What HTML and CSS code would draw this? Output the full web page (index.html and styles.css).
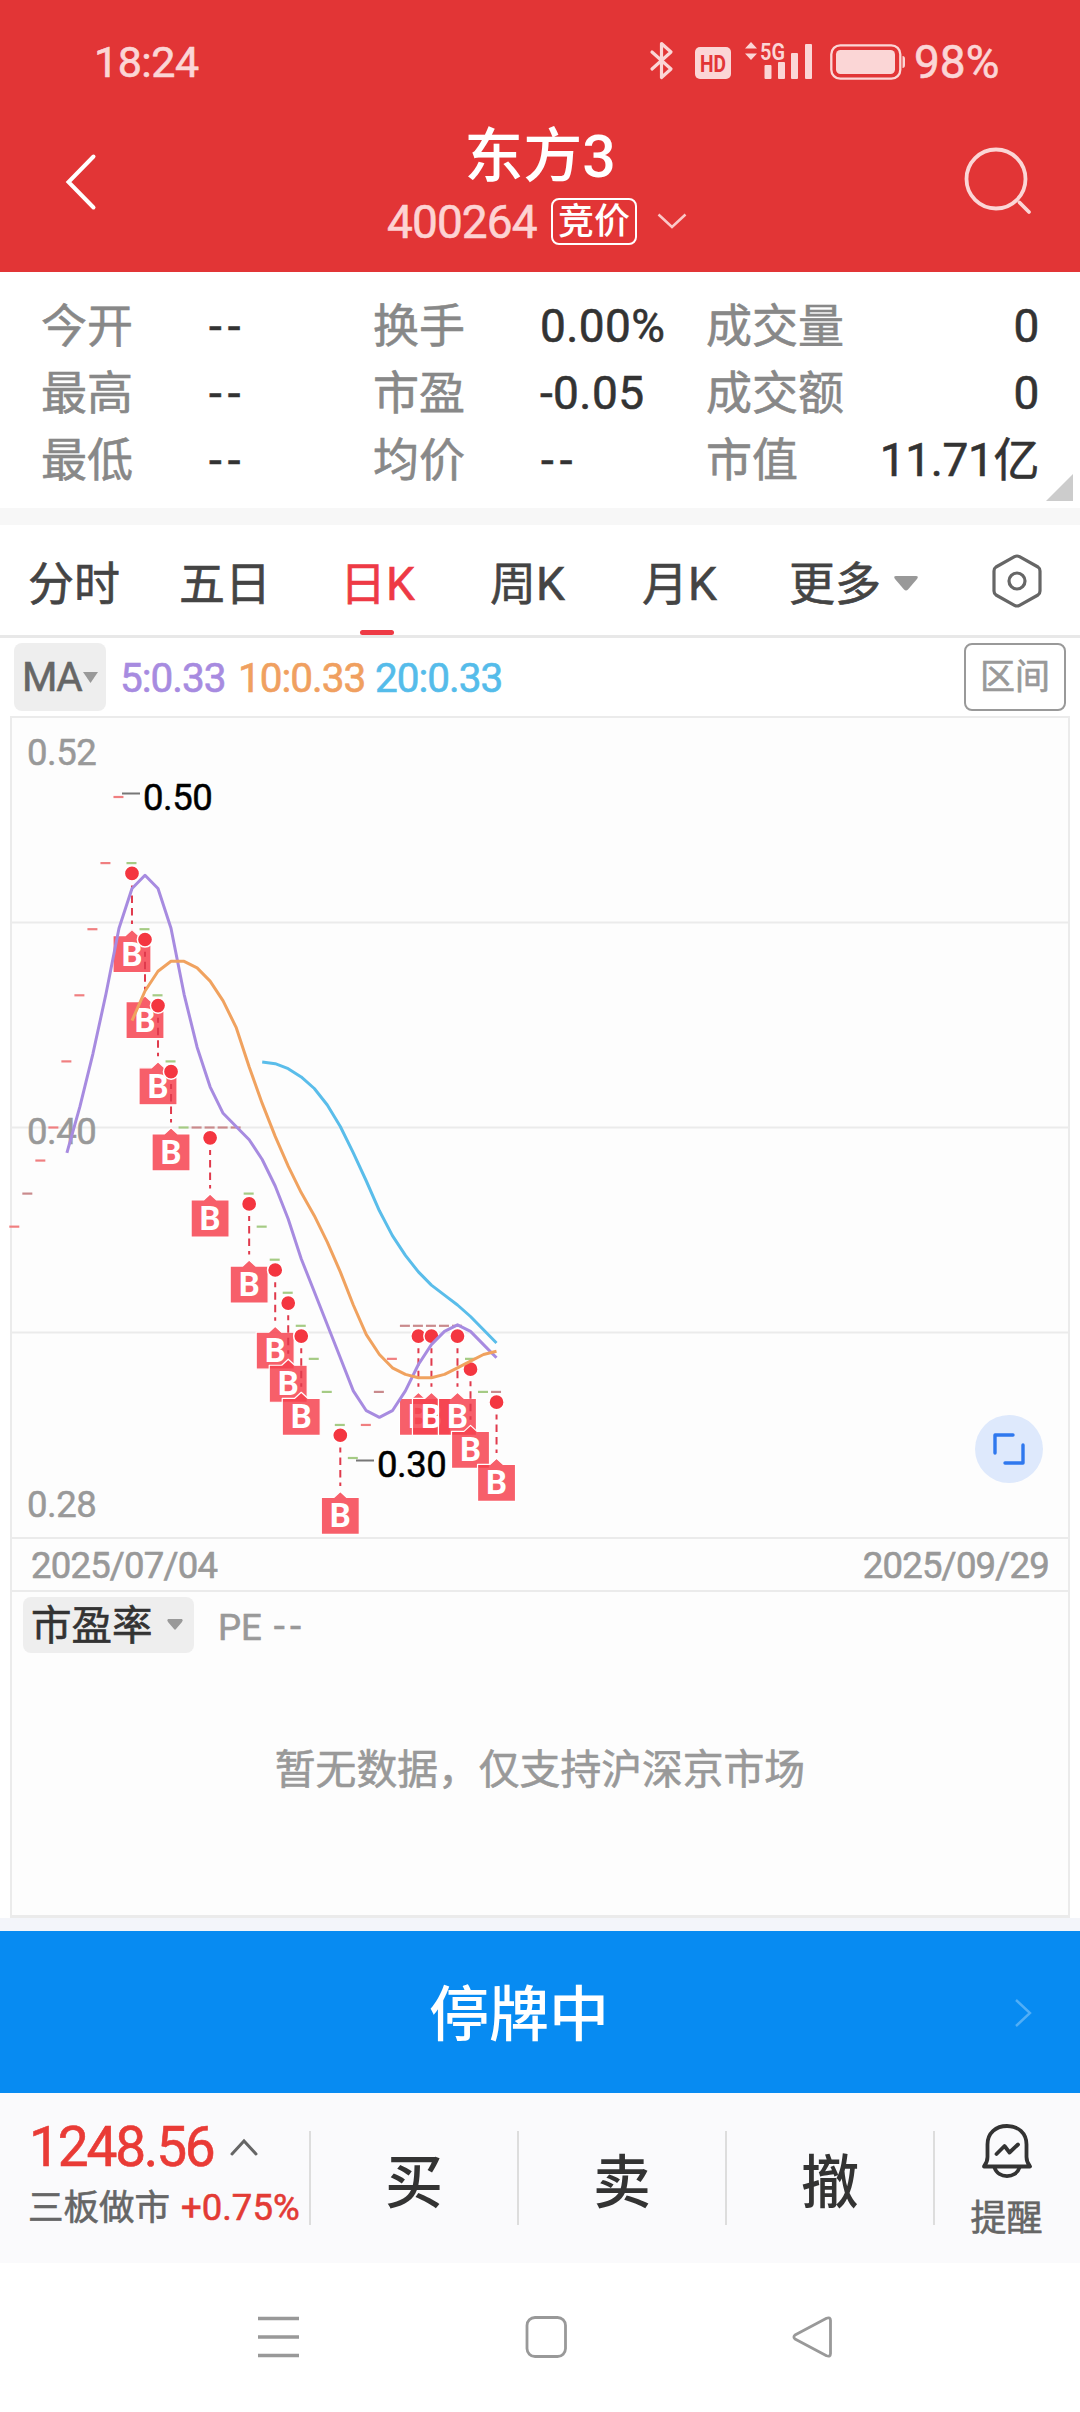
FILE: index.html
```html
<!DOCTYPE html>
<html lang="zh-CN">
<head>
<meta charset="utf-8">
<title>东方3 400264</title>
<link rel="stylesheet" href="styles.css">
</head>
<body>
<div class="screen">
  <header class="header">
    <div class="status">
      <span class="clock">18:24</span>
      <div class="status-icons">
        <svg width="24" height="40" viewBox="0 0 24 40" fill="none" stroke="#fbd6d6" stroke-width="3.200" stroke-linejoin="round" stroke-linecap="round"><path d="M2 11 L21 28 L11.500 36.500 V2.500 L21 11 L2 28"/></svg>
        <svg class="hd" width="36" height="32" viewBox="0 0 36 32"><rect width="36" height="32" rx="5" fill="#fbd6d6"/><text x="18" y="25" text-anchor="middle" font-size="24" font-weight="700" textLength="26" lengthAdjust="spacingAndGlyphs" fill="#e23536">HD</text></svg>
        <svg class="signal" width="68" height="40" viewBox="0 0 68 40" fill="#fbd6d6"><path d="M0 7.500 L6 1 L12 7.500Z M0 12.500 L6 19 L12 12.500Z"/><text x="15" y="18.500" font-size="24" font-weight="600" textLength="25" lengthAdjust="spacingAndGlyphs">5G</text><rect x="19.500" y="24" width="7" height="14" rx="1"/><rect x="33" y="21" width="7" height="17" rx="1"/><rect x="46" y="12" width="7" height="26" rx="1"/><rect x="60" y="3" width="7" height="35" rx="1"/></svg>
        <svg class="battery" width="76" height="36" viewBox="0 0 76 36"><rect x="1.300" y="1.300" width="69" height="33.400" rx="9" fill="none" stroke="#fbd6d6" stroke-width="2.300"/><rect x="6" y="6" width="59" height="24" rx="4.500" fill="#fbd6d6"/><path d="M72.500 12 q2.500 0 2.500 3 v6 q0 3 -2.500 3z" fill="#fbd6d6"/></svg>
        <span class="percent">98%</span>
      </div>
    </div>
    <div class="titlebar">
      <svg class="back" width="32" height="58" viewBox="0 0 32 58" fill="none" stroke="#fff" stroke-width="4" stroke-linecap="round"><path d="M28.500 3.500 L3.500 29 L28.500 54.500"/></svg>
      <div class="title">
        <h1>东方3</h1>
        <div class="code-row"><span class="code">400264</span><span class="badge">竞价</span><svg width="30" height="16" viewBox="0 0 30 16" fill="none" stroke="#fbc8c8" stroke-width="2.500"><path d="M1.500 1.500 L15 14 L28.500 1.500"/></svg></div>
      </div>
      <svg class="search" width="68" height="68" viewBox="0 0 68 68" fill="none" stroke="#fbd6d6" stroke-width="3.800" stroke-linecap="round"><circle cx="32" cy="32" r="29.500"/><path d="M55.500 55.500 L65 65"/></svg>
    </div>
  </header>

  <section class="quotes">
    <span class="k">今开</span><span class="v dash">--</span><span class="k">换手</span><span class="v">0.00%</span><span class="k">成交量</span><span class="v r">0</span>
    <span class="k">最高</span><span class="v dash">--</span><span class="k">市盈</span><span class="v">-0.05</span><span class="k">成交额</span><span class="v r">0</span>
    <span class="k">最低</span><span class="v dash">--</span><span class="k">均价</span><span class="v dash">--</span><span class="k">市值</span><span class="v r cap">11.71亿</span>
    <svg class="corner" width="27" height="27" viewBox="0 0 27 27"><path d="M27 0 V27 H0Z" fill="#ccc"/></svg>
  </section>

  <nav class="tabs">
    <span>分时</span><span>五日</span><span class="on">日K</span><span>周K</span><span>月K</span>
    <span class="more">更多<svg width="24" height="15" viewBox="0 0 24 15"><path d="M2 0 H22 Q25 0 23 3 L14 13.500 Q12 15.500 10 13.500 L1 3 Q-1 0 2 0Z" fill="#999"/></svg></span>
    <svg class="gear" width="50" height="54" viewBox="0 0 50 54" fill="none" stroke="#666" stroke-width="3.200" stroke-linejoin="round"><path d="M22.500 2.700 Q25 1.300 27.500 2.700 L46 13 Q48 14.300 48 17 V37 Q48 39.700 46 41 L27.500 51.300 Q25 52.700 22.500 51.300 L4 41 Q2 39.700 2 37 V17 Q2 14.300 4 13Z"/><circle cx="25" cy="27" r="8"/></svg>
  </nav>

  <div class="ma-row">
    <span class="chip ma">MA<svg width="15" height="11" viewBox="0 0 15 11"><path d="M0 0 H15 L7.500 11Z" fill="#999"/></svg></span>
    <span class="m5">5:0.33</span><span class="m10">10:0.33</span><span class="m20">20:0.33</span>
    <span class="range">区间</span>
  </div>

  <main class="panel">
    <div class="chart">
      <svg id="kline" width="1057" height="819" viewBox="12 718.5 1057 819"></svg>
      <button class="expand" aria-label="全屏"><svg width="32" height="32" viewBox="0 0 32 32" fill="none" stroke="#2f78ee" stroke-width="3.400" stroke-linecap="round" stroke-linejoin="round"><path d="M2 20 V2 H20 M30 12 V30 H12"/></svg></button>
    </div>
    <div class="dates"><span>2025/07/04</span><span>2025/09/29</span></div>
    <div class="pe">
      <div class="pe-head"><span class="chip pe-chip">市盈率<svg width="16" height="11" viewBox="0 0 16 11"><path d="M1 0 H15 Q16.500 1 15 3 L9 10 Q8 11.500 7 10 L1 3 Q-.5 1 1 0Z" fill="#999"/></svg></span><span class="pe-val">PE <span class="dash">--</span></span></div>
      <p class="empty">暂无数据，仅支持沪深京市场</p>
    </div>
  </main>

  <div class="halt"><span>停牌中</span><svg width="18" height="28" viewBox="0 0 18 28" fill="none" stroke="#51aef6" stroke-width="2.400"><path d="M2 1 L16 14 L2 27"/></svg></div>

  <footer class="actions">
    <div class="index">
      <div class="index-top"><span>1248.56</span><svg width="28" height="17" viewBox="0 0 28 17" fill="none" stroke="#666" stroke-width="3" stroke-linecap="round"><path d="M2 15 L14 2 L26 15"/></svg></div>
      <div class="index-sub"><span>三板做市</span><span class="up">+0.75%</span></div>
    </div>
    <div class="act">买</div><div class="act">卖</div><div class="act">撤</div>
    <div class="alert">
      <svg width="52" height="54" viewBox="0 0 52 54" fill="none" stroke="#333" stroke-width="3.800" stroke-linejoin="round"><path d="M3 42.500 Q6.500 38 6.500 33 V20.500 C6.500 9 15 2 26 2 C37 2 45.500 9 45.500 20.500 V33 Q45.500 38 49 42.500Z"/><path d="M13.500 43.500 C17 55 35 55 38.500 43.500"/><path d="M15.500 30 L23.500 22 L28.500 28.500 L37 20.500" stroke-linecap="round"/></svg>
      <span>提醒</span>
    </div>
  </footer>

  <div class="sysnav">
    <svg width="42" height="42" viewBox="0 0 42 42" stroke="#999" stroke-width="3.400"><path d="M0 2.500 H41 M0 21 H41 M0 39.500 H41"/></svg>
    <svg width="42" height="42" viewBox="0 0 42 42" fill="none" stroke="#999" stroke-width="2.800"><rect x="2" y="1.500" width="38.500" height="39" rx="8"/></svg>
    <svg width="42" height="42" viewBox="0 0 42 42" fill="none" stroke="#999" stroke-width="2.800" stroke-linejoin="round"><path d="M3 19 L34.500 2.200 Q38.500 .8 38.500 4.500 V37.500 Q38.500 41.200 34.500 39.800 L3 23 Q.8 21 3 19Z"/></svg>
  </div>
</div>
<script src="chart.js"></script>
</body>
</html>
```

FILE: styles.css
```css
* { box-sizing: border-box; }
body { margin: 0; background: #fff; font-family: Roboto, "Noto Sans CJK SC", sans-serif; color: #333; -webkit-text-stroke: .6px; }
svg { display: block; flex: none; overflow: visible; -webkit-text-stroke: 0; }
svg text { font-family: Roboto, sans-serif; }
.screen { width: 1080px; height: 2412px; display: flex; flex-direction: column; overflow: hidden; white-space: nowrap; }
.screen > * { flex: none; }

.header { height: 272px; background: #e23536; color: #fff; }
.status { height: 122px; padding: 0 70px 0 94px; display: flex; justify-content: space-between; align-items: center; color: #fbd6d6; font-size: 43px; }
.clock { letter-spacing: -.5px; padding-top: 1px; }
.status-icons { display: flex; align-items: center; height: 46px; }
.hd { margin: 3px 0 0 21px; }
.signal { margin-left: 14px; }
.battery { margin: 1px 0 0 17px; }
.percent { width: 96px; margin: 1px 0 0 8px; font-size: 46px; letter-spacing: 0; }
.titlebar { height: 150px; display: grid; grid-template-columns: 200px 1fr 200px; }
.back { margin: 31px 0 0 65px; }
.search { margin: 25px 0 0 84px; }
.title { display: flex; flex-direction: column; }
.title h1 { margin: 0; height: 69px; line-height: 69px; font-size: 59px; font-weight: 500; text-align: center; -webkit-text-stroke: 0; }
.code-row { display: flex; align-items: center; height: 58px; margin-top: 1px; padding-left: 187px; }
.code { width: 164px; padding-top: 2px; font-size: 46px; color: #fdd3d3; letter-spacing: -.9px; }
.badge { width: 86px; height: 47px; line-height: 44px; margin-right: 20px; border: 2px solid #fff; border-radius: 8px; text-align: center; font-size: 36px; font-weight: 500; -webkit-text-stroke: 0; }

.quotes { position: relative; height: 236px; padding: 21px 41px 14px 41px; display: grid; grid-template-columns: 167px 165px 167px 166px 167px 1fr; grid-template-rows: repeat(3, 67px); line-height: 67px; font-size: 46px; }
.k { color: #888; }
.v { letter-spacing: .4px; }
.v.dash { letter-spacing: 6px; padding-left: 1px; }
.r { text-align: right; letter-spacing: -.4px; }
.cap { margin-left: -60px; }
.corner { position: absolute; right: 7px; bottom: 7px; }

.tabs { height: 130px; border-top: 17px solid #f7f7f7; border-bottom: 3px solid #e8e8e8; padding-left: 28px; display: grid; grid-template-columns: 151px 161px 150px 152px 147px 203px 50px; font-size: 46px; line-height: 119px; color: #444; }
.tabs > span { height: 110px; }
.on { justify-self: start; color: #ee3a45; display: flex; flex-direction: column; align-items: center; }
.on::after { content: ""; width: 34px; height: 6px; margin-top: -14px; border-radius: 3px; background: #ee3a45; }
.tabs > .more { height: 119px; display: flex; align-items: center; gap: 13px; }
.more svg { margin-top: -3px; }
.gear { margin-top: 29px; }

.ma-row { height: 78px; display: flex; align-items: center; padding: 0 14px; font-size: 40.500px; }
.chip { background: #eee; border-radius: 8px; display: flex; align-items: center; }
.ma { width: 92px; height: 68px; padding-left: 8px; gap: 2px; letter-spacing: -1.500px; color: #666; }
.m5, .m10, .m20 { letter-spacing: -1px; padding-top: 2px; }
.m5 { color: #a78be0; width: 118px; margin-left: 14px; }
.m10 { color: #f0a060; width: 137px; }
.m20 { color: #55bcea; }
.range { margin-left: auto; width: 102px; height: 68px; line-height: 66px; border: 2px solid #999; border-radius: 8px; text-align: center; font-size: 35px; color: #999; }

.panel { width: 1060px; height: 1202px; margin-left: 10px; border: 2px solid #ebebeb; border-bottom-width: 3px; background: #fdfdfd; }
.chart { position: relative; height: 819px; }
.expand { position: absolute; left: 963px; top: 697px; width: 68px; height: 68px; padding: 0; border: 0; border-radius: 50%; background: #dee9fc; display: flex; align-items: center; justify-content: center; }
.dates { height: 55px; border-top: 2px solid #ebebeb; border-bottom: 2px solid #ebebeb; padding: 2px 19px 0 19px; display: flex; justify-content: space-between; align-items: center; color: #999; font-size: 36.500px; letter-spacing: -.8px; }
.pe-head { height: 66px; display: flex; align-items: center; padding-left: 11px; }
.pe-chip { width: 171px; height: 56px; padding: 2px 0 0 8px; gap: 14px; font-size: 40.500px; line-height: 50px; }
.pe-chip svg { margin-top: -3px; }
.pe-val { margin-left: 24px; padding-top: 2px; font-size: 36.500px; color: #999; }
.pe-val .dash { letter-spacing: 5px; margin-left: 3px; font-size: 40px; }
.empty { margin: 84px 0 0; text-align: center; font-size: 40.800px; line-height: 56px; color: #999; }

.halt { height: 175px; border-top: 13px solid #f3f5fa; background: #078bf2; color: #fff; font-size: 60px; font-weight: 500; line-height: 164px; display: flex; align-items: center; justify-content: space-between; padding: 2px 48px 0 429px; -webkit-text-stroke: 0; }
.halt span { padding-top: 5px; }
.actions { height: 170px; background: #fafafc; display: grid; grid-template-columns: 309px 208px 208px 208px 147px; }
.index { padding: 21px 0 0 28px; }
.index-top { display: flex; align-items: center; gap: 16px; height: 64px; padding: 2px 0 0 1px; font-size: 55px; letter-spacing: -2.200px; color: #e93b36; }
.index-sub { display: flex; gap: 11px; font-size: 35.500px; line-height: 60px; color: #666; }
.up { color: #e33b35; font-size: 36.500px; }
.act { height: 94px; margin-top: 38px; border-left: 2px solid #ddd; text-align: center; font-size: 58px; font-weight: 500; line-height: 105px; -webkit-text-stroke: 0; }
.alert { display: flex; flex-direction: column; align-items: center; padding-top: 31px; font-size: 36px; color: #666; position: relative; }
.alert::before { content: ""; position: absolute; left: 0; top: 38px; width: 2px; height: 94px; background: #ddd; }
.alert span { line-height: 50px; margin-top: 16px; }
.sysnav { height: 149px; display: flex; justify-content: space-between; padding: 53px 246px 0 258px; }
```

FILE: chart.js
```javascript
// Daily closes in cents, oldest first.
const closes = [37, 38, 39, 40, 42, 44, 46, 48, 50, 48, 46, 44, 42, 40, 40, 40, 40, 40, 38, 37, 36, 35, 34, 33, 32, 31, 30, 31, 32, 33, 34, 34, 34, 34, 34, 33, 32, 32];
// u = rising, d = falling, n = unchanged
const trend = "unuuuuuuudddddnnnndddddddddununnnnnddn";
const colors = { u: "#f07f80", d: "#a5cb84", n: "#c98a8c" };
const buys = [9, 10, 11, 12, 15, 18, 20, 21, 22, 25, 31, 32, 34, 35, 37];

const px = i => 14.8 + 13.02 * i;
const py = c => 1128 - 33.05 * (c - 40);
const out = [];

for (const y of [923, 1128, 1333]) {
  out.push(`<path d="M12 ${y}H1068" stroke="#ebebeb" stroke-width="2"/>`);
}

closes.forEach((c, i) => {
  out.push(`<path d="M${px(i) - 5.5} ${py(c)}h10" stroke="${colors[trend[i]]}" stroke-width="2.200"/>`);
});

const label = (x, y, t, fill) => out.push(`<text x="${x}" y="${y}" font-size="36.500" letter-spacing="-.5" fill="${fill}" stroke="${fill}" stroke-width=".5">${t}</text>`);
label(27, 765, "0.52", "#999");
label(27, 1144, "0.40", "#999");
label(27, 1517, "0.28", "#999");

for (const i of buys) {
  const x = px(i), y = py(closes[i]);
  out.push(`<circle cx="${x}" cy="${y + 10.300}" r="7.600" fill="#f43640" stroke="#fff" stroke-width="1.500"/>`);
  out.push(`<path d="M${x} ${y + 22.500}V${y + 61}" stroke="#e03a4c" stroke-width="2" stroke-dasharray="5 5 7.500 5 7.500 5 4 9"/>`);
  out.push(`<path d="M${x - 19} ${y + 72.500}h12.500l6.500 -6l6.500 6h12.500v37h-38z" fill="#f5404d" fill-opacity=".84" stroke="#fff" stroke-width="1.200" stroke-linejoin="round"/>`);
  out.push(`<text x="${x}" y="${y + 102.500}" text-anchor="middle" font-size="33" font-weight="700" fill="#fff">B</text>`);
}

for (const [n, color] of [[5, "#a78be0"], [10, "#f0a25f"], [20, "#5abdea"]]) {
  const pts = [];
  for (let i = n - 1; i < closes.length; i++) {
    const mean = closes.slice(i - n + 1, i + 1).reduce((a, b) => a + b, 0) / n;
    pts.push(px(i).toFixed(1) + "," + (py(mean) - 1).toFixed(1));
  }
  out.push(`<polyline points="${pts.join(" ")}" fill="none" stroke="${color}" stroke-width="3" stroke-linejoin="round"/>`);
}

out.push(`<path d="M122 794h18M356 1461h18" stroke="#777" stroke-width="2"/>`);
label(143, 810, "0.50", "#000");
label(377, 1477, "0.30", "#000");

document.getElementById("kline").innerHTML = out.join("");
```
